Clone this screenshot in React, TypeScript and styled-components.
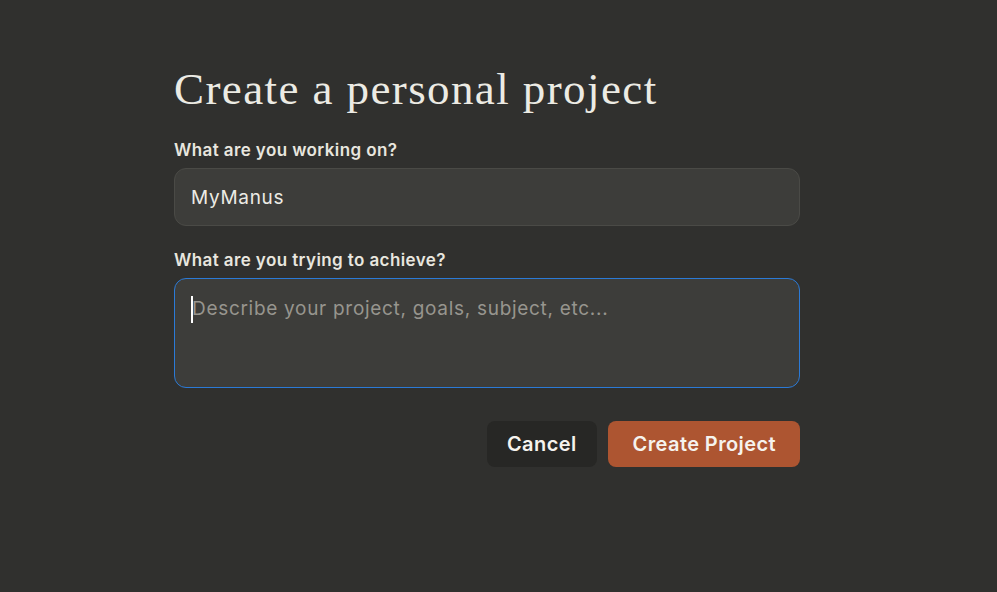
import React from "react";
import styled, { createGlobalStyle } from "styled-components";

const Global = createGlobalStyle`
  html, body { margin: 0; padding: 0; background: #30302e; }
  body { width: 997px; height: 592px; overflow: hidden; }
`;

const Page = styled.div`
  width: 997px;
  height: 592px;
  background: #30302e;
  display: flex;
  justify-content: flex-start;
  box-sizing: border-box;
  padding: 64px 0 0 174px;
`;

const Form = styled.div`
  width: 626px;
  display: flex;
  flex-direction: column;
`;

const Title = styled.h1`
  margin: 0 0 26px 0;
  font-family: "Liberation Serif", serif;
  font-weight: 400;
  font-size: 45px;
  line-height: 50px;
  color: #ecebe4;
  letter-spacing: 1.4px;
`;

const Label = styled.label`
  font-family: Inter, "Noto Sans", sans-serif;
  font-weight: 600;
  font-size: 17px;
  line-height: 20px;
  letter-spacing: 0.4px;
  color: #e8e6df;
  margin-bottom: 8px;
`;

const Field = styled.div<{ $focused?: boolean; $tall?: boolean }>`
  box-sizing: border-box;
  height: ${(p) => (p.$tall ? "110px" : "58px")};
  border-radius: 12px;
  background: #3d3d3a;
  border: 1px solid ${(p) => (p.$focused ? "#2b7ad6" : "#4a4a46")};
  padding: ${(p) => (p.$tall ? "17px 16px" : "2px 16px 0")};
  display: flex;
  align-items: ${(p) => (p.$tall ? "flex-start" : "center")};
  font-family: Inter, "Noto Sans", sans-serif;
  font-size: 19px;
  line-height: 26px;
  letter-spacing: 0.7px;
  margin-bottom: ${(p) => (p.$tall ? "33px" : "24px")};
`;

const Value = styled.span`
  color: #ecebe4;
`;

const Caret = styled.span`
  display: inline-block;
  width: 2px;
  height: 27px;
  background: #ffffff;
  margin-right: -1px;
`;

const Placeholder = styled.span`
  color: #97958e;
`;

const Actions = styled.div`
  display: flex;
  justify-content: flex-end;
  gap: 11px;
`;

const Button = styled.button<{ $primary?: boolean }>`
  height: 46px;
  border: none;
  border-radius: 8px;
  padding: ${(p) => (p.$primary ? "0 24px 0 25px" : "0 20px")};
  font-family: Inter, "Noto Sans", sans-serif;
  font-weight: 600;
  font-size: 20px;
  letter-spacing: 0.4px;
  color: #f5f3ee;
  background: ${(p) => (p.$primary ? "#ad5531" : "#272725")};
  cursor: pointer;
`;

export default function App() {
  return (
    <>
      <Global />
      <Page>
        <Form>
          <Title>Create a personal project</Title>
          <Label>What are you working on?</Label>
          <Field>
            <Value>MyManus</Value>
          </Field>
          <Label>What are you trying to achieve?</Label>
          <Field $focused $tall>
            <Caret />
            <Placeholder>Describe your project, goals, subject, etc...</Placeholder>
          </Field>
          <Actions>
            <Button>Cancel</Button>
            <Button $primary>Create Project</Button>
          </Actions>
        </Form>
      </Page>
    </>
  );
}
